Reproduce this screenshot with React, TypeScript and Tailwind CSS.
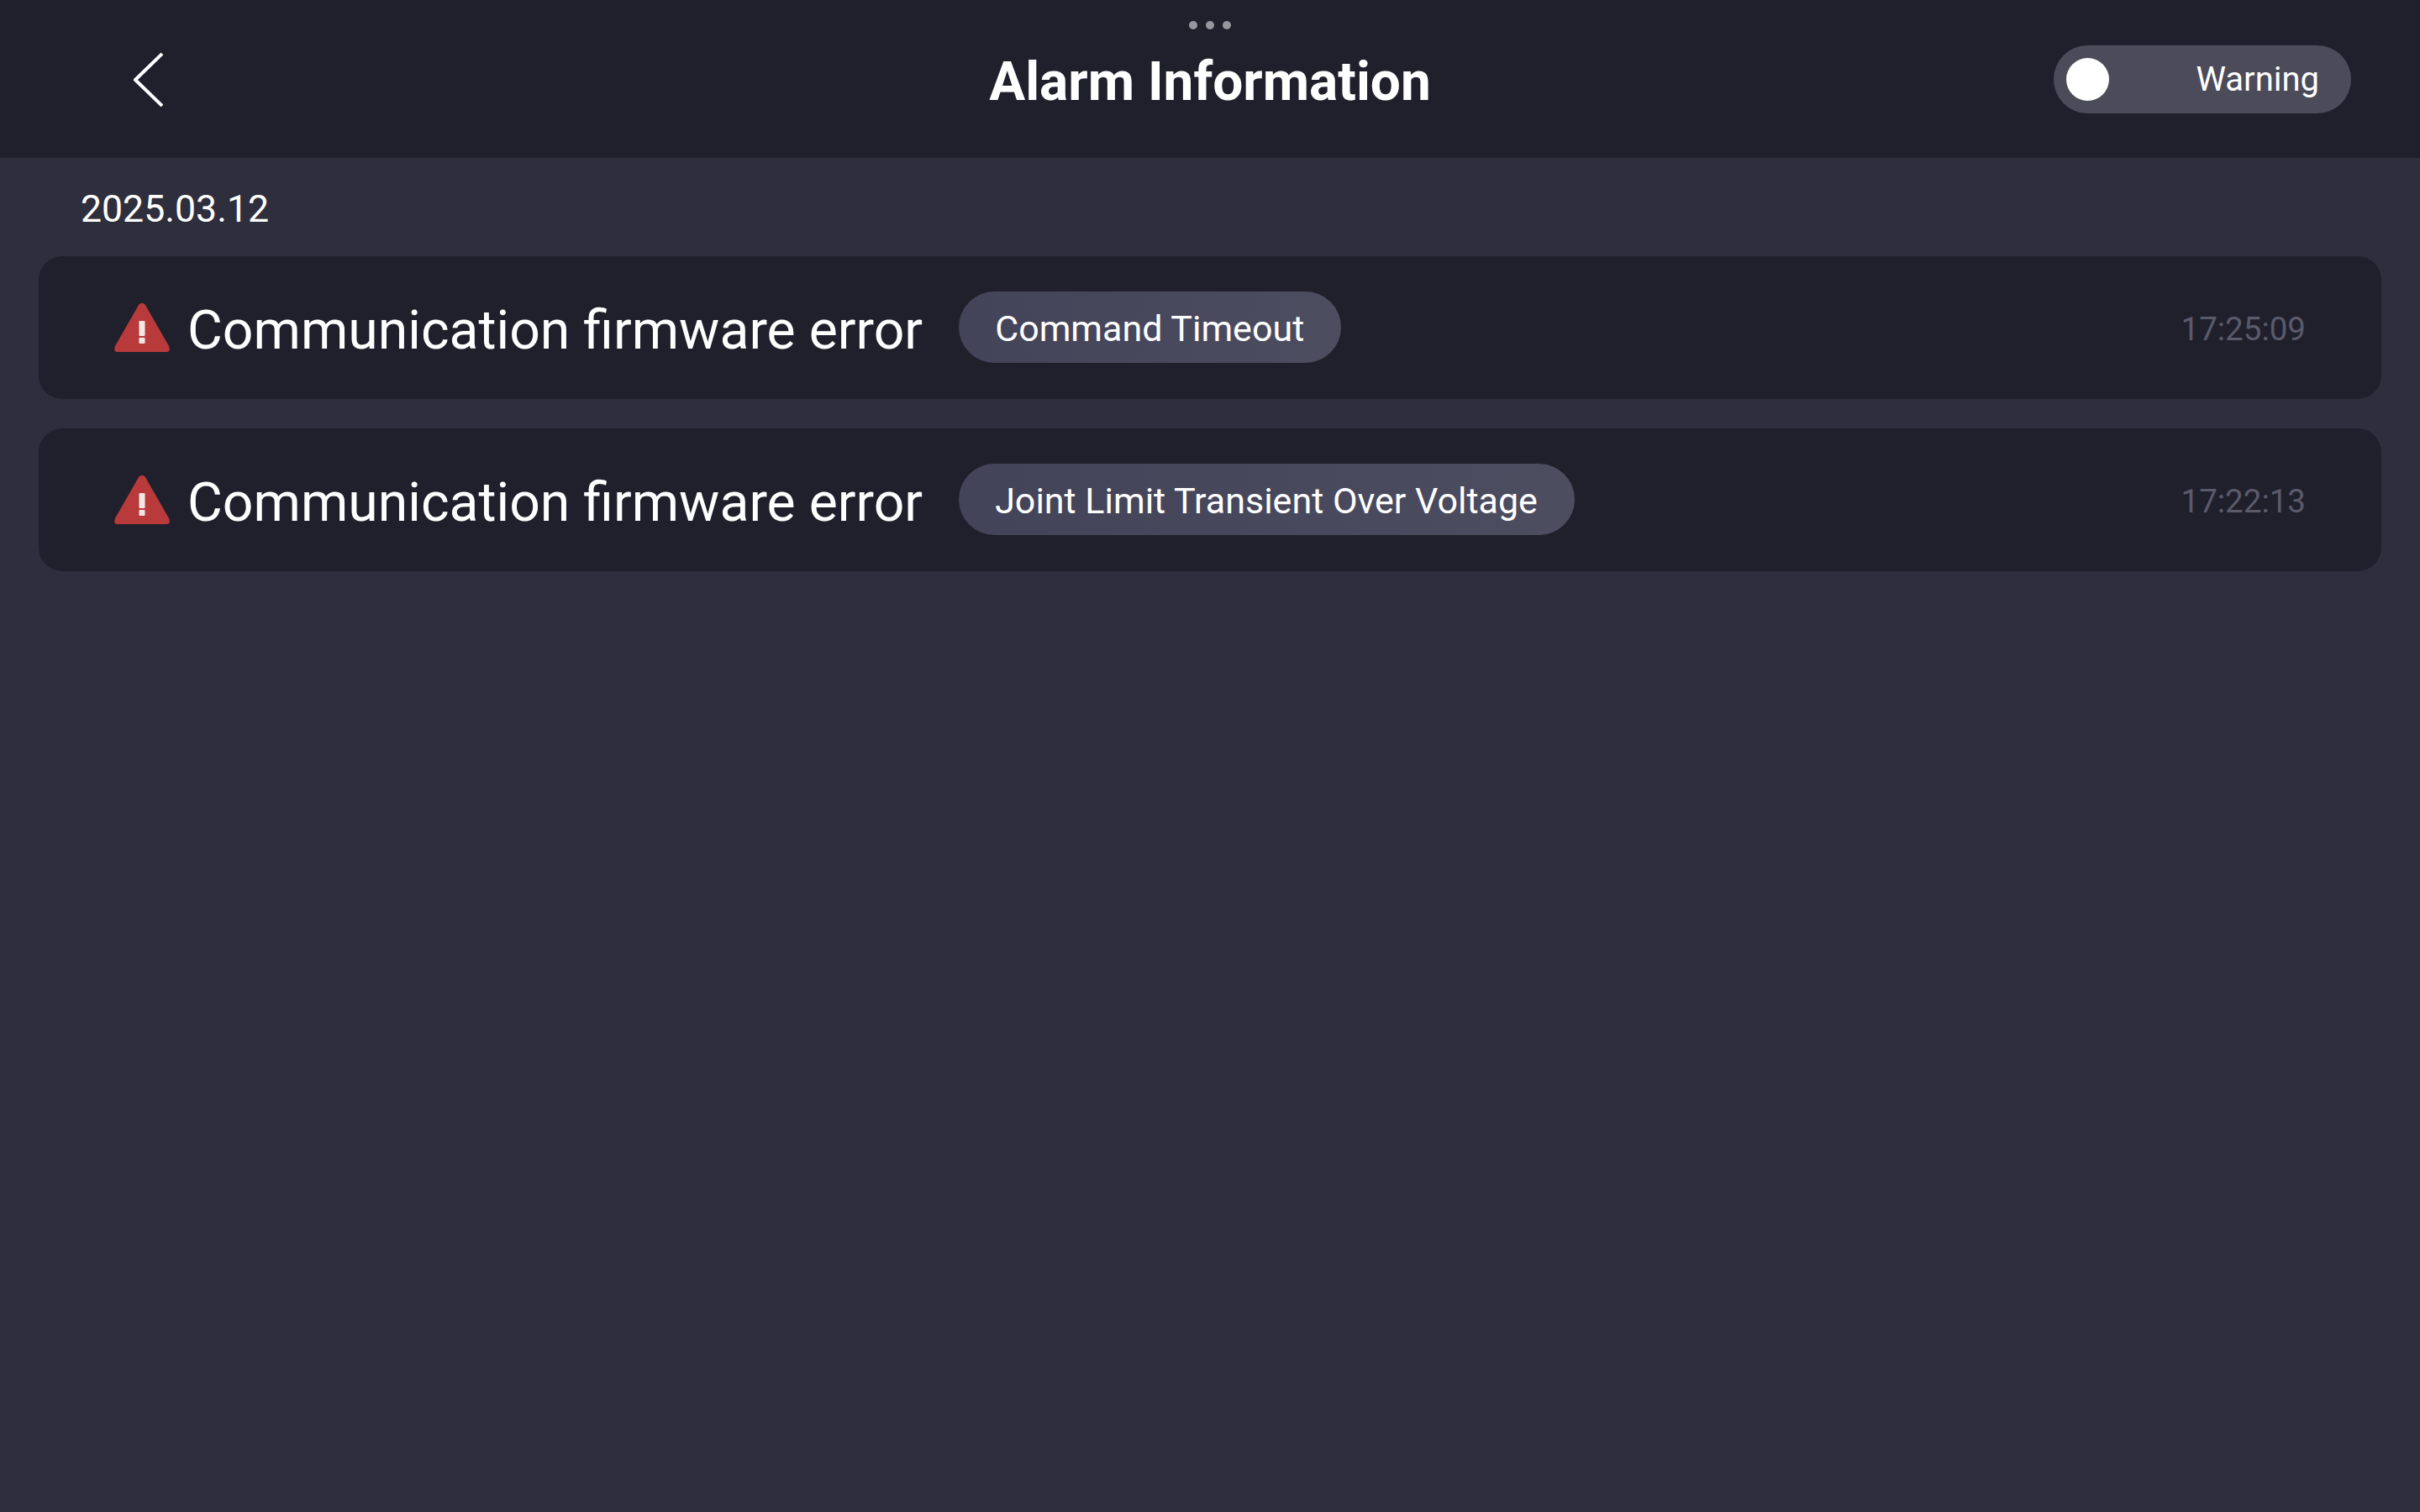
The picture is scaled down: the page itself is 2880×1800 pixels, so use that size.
import React from 'react';

const alarms = [
  { tag: 'Command Timeout', time: '17:25:09' },
  { tag: 'Joint Limit Transient Over Voltage', time: '17:22:13' },
];

const AlertIcon: React.FC = () => (
  <svg viewBox="0 0 66 59" className="w-[66px] h-[59px] shrink-0 -mt-[1px]">
    <path
      d="M29.5 2.2 Q33 -0.8 36.5 2.2 L65 52 Q67.5 59 62 59 L4 59 Q-1.5 59 1 52 Z"
      fill="#b93a3b"
    />
    <rect x="29.5" y="22" width="7" height="18" rx="1" fill="#f5e6e6" />
    <rect x="29.5" y="42" width="7" height="7" rx="1" fill="#f5e6e6" />
  </svg>
);

export default function App() {
  return (
    <div className="w-[2880px] h-[1800px] bg-[#2f2e3c] text-white font-['Roboto',sans-serif] overflow-hidden">
      <header className="relative h-[188px] bg-[#20202c] grid grid-cols-[1fr_auto_1fr] items-center">
        <div className="absolute top-[25px] left-[1415px] flex gap-[10px]">
          <span className="w-[10px] h-[10px] rounded-full bg-[#96969e]" />
          <span className="w-[10px] h-[10px] rounded-full bg-[#96969e]" />
          <span className="w-[10px] h-[10px] rounded-full bg-[#96969e]" />
        </div>
        <div className="pl-[158px] pt-[2px]">
          <svg viewBox="0 0 36 64" className="w-[36px] h-[64px]" fill="none" stroke="white" strokeWidth="4">
            <path d="M35 1 L3 32 L35 63" strokeLinejoin="round" />
          </svg>
        </div>
        <h1 className="text-[63.9px] font-bold leading-none pt-[7px]">Alarm Information</h1>
        <div className="flex justify-end pr-[82px]">
          <div className="w-[354px] h-[81px] rounded-full bg-[#4b4b5a] flex items-center justify-between pl-[15px] pr-[38px]">
            <span className="w-[51px] h-[51px] rounded-full bg-white" />
            <span className="text-[40px] leading-none pt-[2px]">Warning</span>
          </div>
        </div>
      </header>

      <main className="px-[46px]">
        <div className="h-[117px] flex items-center pl-[50px] pt-[5px] text-[44.6px] leading-none">2025.03.12</div>
        <div className="flex flex-col gap-[35px]">
          {alarms.map((a) => (
            <div
              key={a.time}
              className="h-[170px] rounded-[28px] bg-[#20202c] flex items-center pl-[90px] pr-[90px]"
            >
              <AlertIcon />
              <span className="ml-[21px] text-[64.3px] leading-none pt-[7px]">Communication firmware error</span>
              <span className="ml-[43px] -mt-[1px] h-[85px] pl-[43px] pr-[44px] pt-[4px] flex items-center rounded-full bg-gradient-to-r from-[#434359] to-[#4d4d60] text-[43px] leading-none">
                {a.tag}
              </span>
              <span className="ml-auto text-[38.5px] leading-none pt-[5px] text-[#5a5a6b]">{a.time}</span>
            </div>
          ))}
        </div>
      </main>
    </div>
  );
}
